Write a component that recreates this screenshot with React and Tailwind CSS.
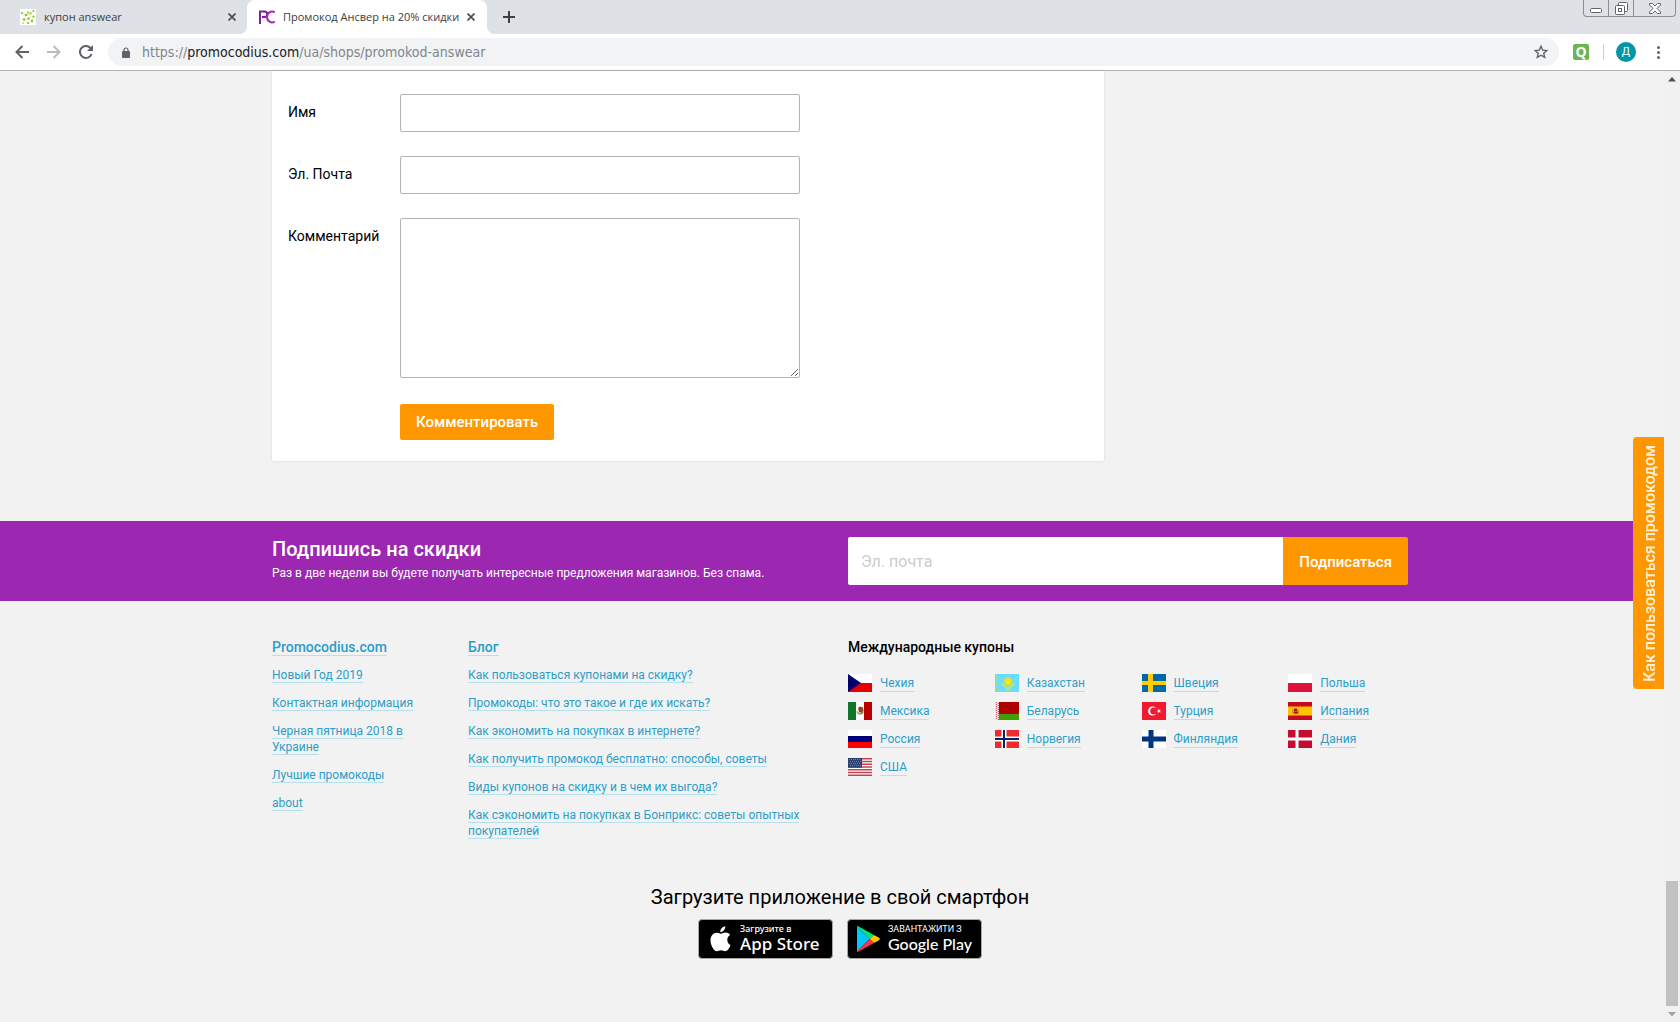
import React, { useState } from "react";

const siteLinks = [
  "Новый Год 2019",
  "Контактная информация",
  "Черная пятница 2018 в Украине",
  "Лучшие промокоды",
  "about",
];

const blogLinks = [
  "Как пользоваться купонами на скидку?",
  "Промокоды: что это такое и где их искать?",
  "Как экономить на покупках в интернете?",
  "Как получить промокод бесплатно: способы, советы",
  "Виды купонов на скидку и в чем их выгода?",
  "Как сэкономить на покупках в Бонприкс: советы опытных покупателей",
];

const countries = [
  { name: "Чехия", flag: "cz" },
  { name: "Казахстан", flag: "kz" },
  { name: "Швеция", flag: "se" },
  { name: "Польша", flag: "pl" },
  { name: "Мексика", flag: "mx" },
  { name: "Беларусь", flag: "by" },
  { name: "Турция", flag: "tr" },
  { name: "Испания", flag: "es" },
  { name: "Россия", flag: "ru" },
  { name: "Норвегия", flag: "no" },
  { name: "Финляндия", flag: "fi" },
  { name: "Дания", flag: "dk" },
  { name: "США", flag: "us" },
];

const flags = {
  cz: (
    <>
      <path fill="#fff" d="M0 0h24v9H0z" />
      <path fill="#e80000" d="M0 9h24v9H0z" />
      <path fill="#00006d" d="M0 0l13 9-13 9z" />
    </>
  ),
  kz: (
    <>
      <path fill="#6bdcff" d="M0 0h24v18H0z" />
      <path stroke="#a8dc8c" strokeWidth="2" strokeDasharray="2 1" d="M2 1v16" />
      <circle cx="13" cy="7.500" r="4.500" fill="#b9e26a" />
      <circle cx="13" cy="7.500" r="3" fill="#ffe400" />
      <path fill="none" stroke="#d6e23c" strokeWidth="1.500" d="M7 9c1 4 4 3 6 5 2-2 5-1 6-5M10 15.500h6" />
    </>
  ),
  se: (
    <>
      <path fill="#006aa7" d="M0 0h24v18H0z" />
      <path fill="#fecc00" d="M6 0h5v18H6zM0 7h24v4H0z" />
    </>
  ),
  pl: (
    <>
      <path fill="#fff" d="M0 0h24v9H0z" />
      <path fill="#dc143c" d="M0 9h24v9H0z" />
    </>
  ),
  mx: (
    <>
      <path fill="#fff" d="M0 0h24v18H0z" />
      <path fill="#127529" d="M0 0h8v18H0z" />
      <path fill="#b90000" d="M16 0h8v18h-8z" />
      <path fill="none" stroke="#7f9a6a" strokeWidth="1.500" d="M9 9.500c1 3 5 3.500 6.500 0" />
      <path fill="#8f4620" d="M10 6l2-1.500 3 1 .5 3-2 2.500-2.500-1z" />
    </>
  ),
  by: (
    <>
      <path fill="#b20000" d="M0 0h24v12H0z" />
      <path fill="#429f00" d="M0 12h24v6H0z" />
      <path fill="#f3dede" d="M0 0h4v18H0z" />
      <path stroke="#d05c5c" strokeWidth="1" strokeDasharray="1 1" d="M1.500 0v18M3.500 1v17" />
    </>
  ),
  tr: (
    <>
      <path fill="#f31930" d="M0 0h24v18H0z" />
      <circle cx="10.500" cy="9" r="4.500" fill="#fff" />
      <circle cx="11.800" cy="9" r="3.600" fill="#f31930" />
      <path fill="#fff" d="M14.500 9l1.700-.5.1-1.700 1 1.300 1.600-.5-1 1.400 1 1.400-1.600-.5-1 1.300-.1-1.700z" />
    </>
  ),
  es: (
    <>
      <path fill="#c60b1e" d="M0 0h24v18H0z" />
      <path fill="#ffc400" d="M0 4.500h24v9H0z" />
      <path fill="#c8672a" d="M4 7h7v5H4z" opacity=".5" />
      <path fill="#ad1519" d="M6 6.500h3V9H6zM6 9.500h4v2H6z" />
    </>
  ),
  ru: (
    <>
      <path fill="#fff" d="M0 0h24v6H0z" />
      <path fill="#00007c" d="M0 6h24v6H0z" />
      <path fill="#fe0000" d="M0 12h24v6H0z" />
    </>
  ),
  no: (
    <>
      <path fill="#ef2b2d" d="M0 0h24v18H0z" />
      <path fill="#fff" d="M6.500 0h5v18h-5zM0 6.500h24v5H0z" />
      <path fill="#002868" d="M8 0h2v18H8zM0 8h24v2H0z" />
    </>
  ),
  fi: (
    <>
      <path fill="#fff" d="M0 0h24v18H0z" />
      <path fill="#003580" d="M6.500 0h5v18h-5zM0 6.500h24v5H0z" />
    </>
  ),
  dk: (
    <>
      <path fill="#c60c30" d="M0 0h24v18H0z" />
      <path fill="#fff" d="M7.500 0h3v18h-3zM0 7.500h24v3H0z" />
    </>
  ),
  us: (
    <>
      <path fill="#fff" d="M0 0h24v18H0z" />
      <path
        stroke="#c0414f"
        strokeWidth="1.385"
        d="M0 .7h24M0 3.460h24M0 6.230h24M0 9h24M0 11.770h24M0 14.540h24M0 17.300h24"
      />
      <path fill="#2c3f70" d="M0 0h14v9.700H0z" />
      <path
        stroke="#8893b4"
        strokeDasharray="1 1"
        strokeWidth=".8"
        d="M1 1.500h12M2 3.500h11M1 5.500h12M2 7.500h11"
      />
    </>
  ),
};

const Flag = ({ code }) => (
  <svg width="24" height="18" viewBox="0 0 24 18" className="shrink-0" aria-hidden="true">
    {flags[code]}
  </svg>
);

const CloseIcon = () => (
  <svg width="8" height="8" viewBox="0 0 8 8" stroke="#4a4d51" strokeWidth="1.700" aria-hidden="true">
    <path d="M.5.5l7 7M7.500.5l-7 7" />
  </svg>
);

const FooterLink = ({ children }) => (
  <a href="#" className="border-b border-[#b7dfec] text-[#2b9ec9]">
    {children}
  </a>
);

const WindowButtons = () => (
  <div className="flex h-[17px] rounded-b border border-t-0 border-[#8b8f94] text-[#5f6368]">
    <button aria-label="Свернуть" className="flex w-6 items-center justify-center pt-1">
      <svg width="12" height="5" viewBox="0 0 12 5" fill="#fff" stroke="currentColor">
        <rect x=".5" y=".5" width="11" height="4" rx="1" />
      </svg>
    </button>
    <button
      aria-label="Восстановить"
      className="flex w-[26px] items-center justify-center border-x border-[#8b8f94]"
    >
      <svg width="13" height="13" viewBox="0 0 13 13" fill="#fff" stroke="currentColor">
        <rect x="3.500" y=".5" width="9" height="9" rx="1" />
        <rect x=".5" y="3.500" width="9" height="9" rx="1" />
        <rect x="3.500" y="6.500" width="3" height="3" />
      </svg>
    </button>
    <button aria-label="Закрыть" className="flex w-[41px] items-center justify-center">
      <svg width="12" height="11" viewBox="0 0 12 11" fill="#fff" stroke="currentColor">
        <path d="M.5.5h3L6 3 8.500.5h3v1.500L8 5.500 11.500 9v1.500h-3L6 8l-2.500 2.500h-3V9L4 5.500.5 2z" />
      </svg>
    </button>
  </div>
);

const TabStrip = () => (
  <div className="flex h-[34px] justify-between bg-[#dee1e6] font-['Open_Sans',sans-serif] text-[11px] text-[#3c4043]">
    <div className="flex">
      <div className="flex w-[247px] items-center pr-[11px] pl-5">
        <svg width="16" height="16" viewBox="0 0 16 16" aria-hidden="true">
          <path fill="#fff" d="M0 0h16v16H0z" />
          <path
            fill="none"
            stroke="#c9dfa0"
            strokeWidth=".6"
            d="M2 4l4 2 5-2 3-2M6 6l-2 5 4-1 4 2 1-4-3 0-2-3M4 11l4 3 4-2"
          />
          <g fill="#8cc321">
            <circle cx="2" cy="4" r="1.100" />
            <circle cx="6" cy="6" r="1.300" />
            <circle cx="8" cy="3.500" r="1" />
            <circle cx="10.500" cy="4.500" r="1.100" />
            <circle cx="13.500" cy="2" r="1" />
            <circle cx="13.500" cy="7.500" r="1.100" />
            <circle cx="4" cy="10.500" r="1.300" />
            <circle cx="8.500" cy="9.500" r="1.200" />
            <circle cx="12" cy="12" r="1.200" />
            <circle cx="8" cy="14" r="1.100" />
            <circle cx="3" cy="14" r=".8" />
          </g>
        </svg>
        <span className="ml-2 flex-1">купон answear</span>
        <button aria-label="Закрыть вкладку">
          <CloseIcon />
        </button>
      </div>
      <div className="relative flex w-[240px] items-center rounded-t-lg bg-white px-3">
        <span className="absolute right-full bottom-0 size-2 bg-[radial-gradient(circle_at_0_0,transparent_8px,white_8px)]" />
        <span className="absolute bottom-0 left-full size-2 bg-[radial-gradient(circle_at_100%_0,transparent_8px,white_8px)]" />
        <svg width="16" height="14" viewBox="0 0 16 14" fill="none" strokeWidth="2" aria-hidden="true">
          <path stroke="#7a1fa2" d="M1 14V1.500h4.500a2.600 2.600 0 0 1 0 5.500H3" />
          <path stroke="#a32bb8" d="M15.800 2.300C12 .2 8 3 8 7s4 6.800 7.800 4.700" />
        </svg>
        <span className="ml-2 flex-1 whitespace-nowrap">
          Промокод Ансвер на 20% скидки
        </span>
        <button aria-label="Закрыть вкладку">
          <CloseIcon />
        </button>
      </div>
      <button aria-label="Новая вкладка" className="ml-4">
        <svg width="12" height="12" viewBox="0 0 12 12" stroke="#3c4043" strokeWidth="2">
          <path d="M6 0v12M0 6h12" />
        </svg>
      </button>
    </div>
    <div className="pr-1">
      <WindowButtons />
    </div>
  </div>
);

const Toolbar = () => (
  <div className="flex h-[37px] items-center border-b border-[#b3b3b3] bg-white pr-5 pl-[15px]">
    <button aria-label="Назад">
      <svg width="14" height="14" viewBox="0 0 14 14" fill="none" stroke="#5f6368" strokeWidth="2">
        <path d="M14 7H1.500M7.500 1l-6 6 6 6" />
      </svg>
    </button>
    <button aria-label="Вперед" className="ml-[18px]">
      <svg width="14" height="14" viewBox="0 0 14 14" fill="none" stroke="#babcbe" strokeWidth="2">
        <path d="M0 7h12.500M6.500 1l6 6-6 6" />
      </svg>
    </button>
    <button aria-label="Обновить" className="ml-[18px]">
      <svg width="14" height="14" viewBox="0 0 14 14" fill="none" stroke="#5f6368" strokeWidth="2">
        <path d="M12.600 9A6 6 0 1 1 11.500 3L13 4.500" />
        <path fill="#5f6368" stroke="none" d="M14 0v6H8z" />
      </svg>
    </button>
    <div className="ml-[15px] flex h-7 flex-1 items-center rounded-full bg-[#f1f3f4] pr-[11px] pl-[14px]">
      <svg width="8" height="11" viewBox="0 0 8 11" aria-hidden="true">
        <rect y="4" width="8" height="7" rx="1" fill="#5f6368" />
        <path d="M2 4.500V3a2 2 0 0 1 4 0v1.500" fill="none" stroke="#5f6368" strokeWidth="1.200" />
      </svg>
      <div
        role="textbox"
        aria-label="Адресная строка"
        className="ml-3 flex-1 font-['DejaVu_Sans_Condensed','DejaVu_Sans',sans-serif] text-sm text-[#80868b]"
      >
        https://<span className="text-[#202124]">promocodius.com</span>/ua/shops/promokod-answear
      </div>
      <button aria-label="Добавить в закладки">
        <svg width="14" height="14" viewBox="0 0 14 14" fill="none" stroke="#5f6368" strokeWidth="1.400">
          <path d="M7 1.200l1.700 3.900 4.200.4-3.200 2.800 1 4.100L7 10.200l-3.700 2.200 1-4.100L1.100 5.500l4.200-.4z" />
        </svg>
      </button>
    </div>
    <div className="ml-[14px] flex size-4 items-center justify-center rounded-xs bg-[#6cb557] font-['Open_Sans',sans-serif] text-sm leading-4 font-bold text-white">
      Q
    </div>
    <div className="ml-[14px] h-4 w-px bg-[#cfd1d4]" />
    <div className="ml-3 flex size-5 items-center justify-center rounded-full bg-[#0097a7] font-[Roboto,sans-serif] text-[11px] text-white">
      Д
    </div>
    <button aria-label="Меню" className="ml-[21px]">
      <svg width="3" height="13" viewBox="0 0 3 13" fill="#5f6368">
        <circle cx="1.500" cy="1.500" r="1.500" />
        <circle cx="1.500" cy="6.500" r="1.500" />
        <circle cx="1.500" cy="11.500" r="1.500" />
      </svg>
    </button>
  </div>
);

const CommentForm = () => {
  const [formData, setFormData] = useState({ name: "", email: "", comment: "" });

  const handleChange = (e) => {
    const { name, value } = e.target;
    setFormData({ ...formData, [name]: value });
  };

  return (
    <form
      onSubmit={(e) => e.preventDefault()}
      className="flex w-full max-w-[832px] flex-col gap-6 rounded-b-xs bg-white px-4 pt-[23px] pb-[21px] text-sm shadow-[0_0_2px_rgba(0,0,0,0.16)]"
    >
      <div className="flex items-start">
        <label htmlFor="name" className="w-28 shrink-0 pt-2">Имя</label>
        <input
          id="name"
          type="text"
          name="name"
          value={formData.name}
          onChange={handleChange}
          className="h-[38px] w-full max-w-[400px] rounded-xs border border-[#b3b3b3] px-3"
        />
      </div>

      <div className="flex items-start">
        <label htmlFor="email" className="w-28 shrink-0 pt-2">Эл. Почта</label>
        <input
          id="email"
          type="text"
          name="email"
          value={formData.email}
          onChange={handleChange}
          className="h-[38px] w-full max-w-[400px] rounded-xs border border-[#b3b3b3] px-3"
        />
      </div>

      <div className="flex items-start">
        <label htmlFor="comment" className="w-28 shrink-0 pt-2">Комментарий</label>
        <textarea
          id="comment"
          name="comment"
          value={formData.comment}
          onChange={handleChange}
          className="h-40 w-full max-w-[400px] rounded-xs border border-[#b3b3b3] px-3 py-2"
        ></textarea>
      </div>

      <div className="pt-0.5 pl-28">
        <button className="h-9 rounded-xs bg-[#ff9800] px-4 pt-0.5 text-[15px] font-medium text-white">
          Комментировать
        </button>
      </div>
    </form>
  );
};

const SubscribeBar = () => (
  <section className="bg-[#9c27b0] text-white">
    <div className="mx-auto grid max-w-[1136px] grid-cols-[576px_1fr] py-4">
      <div>
        <h2 className="text-xl leading-6 font-medium">Подпишись на скидки</h2>
        <p className="mt-1 text-xs leading-4">
          Раз в две недели вы будете получать интересные предложения магазинов. Без спама.
        </p>
      </div>
      <form onSubmit={(e) => e.preventDefault()} className="flex h-12">
        <input
          type="text"
          aria-label="Эл. почта"
          placeholder="Эл. почта"
          className="min-w-0 flex-1 rounded-l-xs bg-white px-[13px] pt-0.5 text-base text-black placeholder:text-[#cccccc]"
        />
        <button className="rounded-r-xs bg-[#ff9800] px-4 pt-0.5 text-[15px] font-medium">Подписаться</button>
      </form>
    </div>
  </section>
);

const LinkList = ({ title, links }) => (
  <div>
    <h3 className="text-sm leading-5 font-medium">
      <FooterLink>{title}</FooterLink>
    </h3>
    <ul className="mt-[10px] flex flex-col gap-3 text-xs leading-4">
      {links.map((link) => (
        <li key={link}>
          <FooterLink>{link}</FooterLink>
        </li>
      ))}
    </ul>
  </div>
);

const StoreBadges = () => (
  <div className="mt-2 flex gap-[14px] whitespace-nowrap text-white">
    <a href="#" className="flex h-10 w-[135px] items-center rounded-sm border border-[#a6a6a6] bg-black pl-[11px]">
      <svg width="21" height="26" viewBox="0 0 21 26" fill="#fff" className="shrink-0" aria-hidden="true">
        <path d="M15.300.3c.1 1.500-.5 2.900-1.400 4-.9 1.100-2.300 1.900-3.600 1.800-.2-1.400.5-2.900 1.300-3.800C12.600 1.200 14.100.4 15.300.3z" />
        <path d="M17.300 13.700c0-2.300 1.400-3.800 2.900-4.700-1.200-1.700-3-2.300-4.500-2.400-1.900-.2-3.700 1.100-4.700 1.100S8.500 6.700 6.900 6.700C3.700 6.800.5 9.300.5 14.200c0 4.300 2.900 10.800 6.200 11.100 1.500 0 2.400-1 4.200-1s2.600 1 4.200 1c2.400-.1 4.500-3.500 5.400-6.300-2-.8-3.200-2.800-3.200-5.300z" />
      </svg>
      <span className="ml-[9px] flex flex-col font-['Noto_Sans',sans-serif]">
        <span className="text-[9px] leading-[10px] font-medium">Загрузите в</span>
        <span className="text-[17px] leading-5 font-medium">App Store</span>
      </span>
    </a>
    <a href="#" className="flex h-10 w-[135px] items-center rounded-sm border border-[#a6a6a6] bg-black pl-[9px]">
      <svg width="23" height="26" viewBox="0 0 23 26" className="shrink-0" aria-hidden="true">
        <path fill="#00c8ff" d="M0 .5v25L12.500 13z" />
        <path fill="#00e676" d="M0 .5c.5-.5 1-.5 1.700-.1L17 9l-4.300 4.200z" />
        <path fill="#ffc900" d="M17 9l5 2.800c1 .6 1 1.800 0 2.400L17 17l-4.300-4z" />
        <path fill="#f4364a" d="M0 25.500c.5.500 1 .5 1.700.1L17 17l-4.300-4z" />
      </svg>
      <span className="ml-2 flex flex-col">
        <span className="text-[9px] leading-[10px]">ЗАВАНТАЖИТИ З</span>
        <span className="font-[Lato,sans-serif] text-base leading-5 font-medium">Google Play</span>
      </span>
    </a>
  </div>
);

const Footer = () => (
  <footer>
    <div className="mx-auto grid max-w-[1136px] grid-cols-[196px_380px_1fr] pt-9">
      <div className="pr-12">
        <LinkList title="Promocodius.com" links={siteLinks} />
      </div>
      <div className="pr-11">
        <LinkList title="Блог" links={blogLinks} />
      </div>
      <div>
        <h3 className="text-sm leading-5 font-medium">Международные купоны</h3>
        <ul className="mt-4 grid grid-cols-4 gap-x-[27px] gap-y-2 text-xs leading-4">
          {countries.map((country) => (
            <li key={country.flag} className="flex h-5 items-center gap-2">
              <Flag code={country.flag} />
              <FooterLink>{country.name}</FooterLink>
            </li>
          ))}
        </ul>
      </div>
    </div>
    <div className="flex flex-col items-center pt-11 pb-16">
      <h2 className="text-xl leading-7">Загрузите приложение в свой смартфон</h2>
      <StoreBadges />
    </div>
  </footer>
);

const Scrollbar = () => (
  <div className="absolute inset-y-0 right-0 flex w-4 flex-col items-center bg-[#f1f1f1] py-[6px]">
    <svg width="8" height="5" viewBox="0 0 8 5" fill="#505050">
      <path d="M0 4.500L4 0l4 4.500z" />
    </svg>
    <div className="mt-auto mb-[6px] h-[125px] w-3 bg-[#c1c1c1]" />
    <svg width="8" height="5" viewBox="0 0 8 5" fill="#a3a3a3">
      <path d="M0 0l4 4.500L8 0z" />
    </svg>
  </div>
);

export default function App() {
  return (
    <div className="flex min-h-screen flex-col">
      <TabStrip />
      <Toolbar />
      <div className="relative flex-1 bg-[#f2f2f2] font-[Roboto,sans-serif] text-black">
        <main>
          <div className="mx-auto max-w-[1136px] pb-[60px]">
            <CommentForm />
          </div>
          <SubscribeBar />
        </main>
        <Footer />
        <Scrollbar />
        <button className="fixed top-[437px] right-4 h-[252px] w-[31px] rotate-180 rounded-r-sm bg-[#ff9800] pr-[3px] text-base font-medium text-white/85 [writing-mode:vertical-rl]">
          Как пользоваться промокодом
        </button>
      </div>
    </div>
  );
}
